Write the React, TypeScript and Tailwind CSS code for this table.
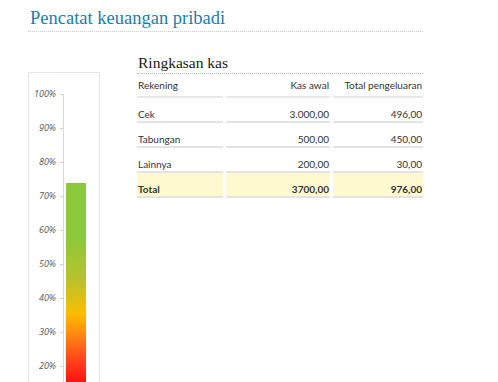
const ticks = ['100%', '90%', '80%', '70%', '60%', '50%', '40%', '30%', '20%'];

const rows = [
  { name: 'Cek', awal: '3.000,00', keluar: '496,00' },
  { name: 'Tabungan', awal: '500,00', keluar: '450,00' },
  { name: 'Lainnya', awal: '200,00', keluar: '30,00' },
];

const value = 0.738;

function Chart() {
  return (
    <div className="w-[72px] h-[340px] mt-[40px] border border-[#e4e4e4] flex shrink-0 overflow-hidden">
      <div className="w-[34px] pt-[4px] flex flex-col">
        {ticks.map((t) => (
          <div key={t} className="h-[34px] shrink-0 flex items-center justify-end">
            <span className="text-[9px] italic text-[#595959] font-['Open_Sans',sans-serif]">{t}</span>
            <span className="ml-[4px] w-[3px] h-px bg-[#cfcfd8]" />
          </div>
        ))}
      </div>
      <div className="mt-[21px] h-[340px] border-l border-[#d8d6e4] flex items-end pl-[2px]">
        <div
          className="w-[20px] bg-[linear-gradient(to_bottom,#8cc83c_0%,#8cc83c_22%,#b8c22e_38%,#e2c010_47%,#fbbd00_52%,#ff8a10_60%,#ff3a1c_72%,#ff1010_80%,#ff0000_100%)]"
          style={{ height: `${value * 340}px` }}
        />
      </div>
    </div>
  );
}

function Cell({ children, right, total }: { children: React.ReactNode; right?: boolean; total?: boolean }) {
  return (
    <div
      className={`h-[25px] flex items-end pb-[1px] px-[1px] border-b-2 border-[#e3e3e3] ${right ? 'justify-end' : ''} ${total ? 'bg-[#fff9cf] font-bold h-[24px]' : ''}`}
    >
      {children}
    </div>
  );
}

export default function App() {
  return (
    <div className="w-[498px] h-[382px] overflow-hidden bg-white">
      <div className="ml-[28px] w-[395px]">
        <div className="pt-[6px] pb-[1px] pl-[2px] border-b border-dotted border-[#c8c8c8]">
          <h1 className="text-[18.5px] leading-[24px] text-[#1e7cae] font-['Liberation_Serif',serif]">
            Pencatat keuangan pribadi
          </h1>
        </div>
        <div className="flex">
          <Chart />
          <div className="ml-[37px] flex-1 mt-[21px]">
            <h2 className="text-[15.5px] leading-[19px] text-[#1a1a1a] font-['Liberation_Serif',serif] pl-[1px] pb-px border-b border-dotted border-[#b8b8b8]">
              Ringkasan kas
            </h2>
            <div className="grid grid-cols-[86px_104px_1fr] gap-x-[3px] text-[10px] leading-[12px] text-[#333] font-['Lato',sans-serif]">
              <div className="h-[24px] flex items-center border-b-2 border-[#e8e8e8] px-[1px]">Rekening</div>
              <div className="h-[24px] flex items-center justify-end border-b-2 border-[#e8e8e8] px-[1px]">Kas awal</div>
              <div className="h-[24px] flex items-center justify-end border-b-2 border-[#e8e8e8] px-[1px]">Total pengeluaran</div>
              {rows.map((r) => (
                <>
                  <Cell key={r.name + 'a'}>{r.name}</Cell>
                  <Cell key={r.name + 'b'} right>{r.awal}</Cell>
                  <Cell key={r.name + 'c'} right>{r.keluar}</Cell>
                </>
              ))}
              <Cell total>Total</Cell>
              <Cell total right>3700,00</Cell>
              <Cell total right>976,00</Cell>
            </div>
          </div>
        </div>
      </div>
    </div>
  );
}
